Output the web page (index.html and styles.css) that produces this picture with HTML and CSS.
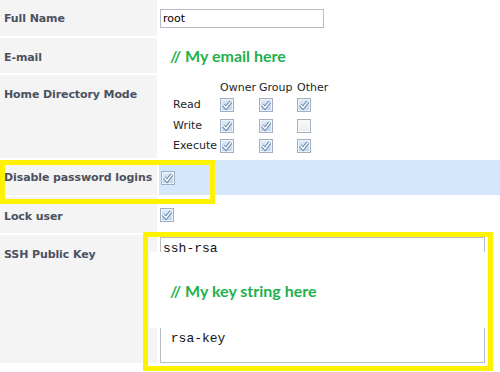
FILE: index.html
```html
<!DOCTYPE html>
<html>
<head>
<meta charset="utf-8">
<link rel="stylesheet" href="styles.css">
</head>
<body>
<div class="form">
  <div class="label label-first">Full Name</div>
  <div class="value center"><div class="textbox">root</div></div>

  <div class="label">E-mail</div>
  <div class="value center"><span class="note">// My email here</span></div>

  <div class="label">Home Directory Mode</div>
  <div class="value perms-cell">
    <div class="perms">
      <span></span><span class="head">Owner</span><span class="head">Group</span><span class="head">Other</span>
      <span class="rl">Read</span>
      <span class="cb"><svg viewBox="0 0 14 14"><path class="ck-o" d="M3.3 6.8 L6 9.8 L10.8 3.6"/><path class="ck-i" d="M3.3 6.8 L6 9.8 L10.8 3.6"/></svg></span>
      <span class="cb"><svg viewBox="0 0 14 14"><path class="ck-o" d="M3.3 6.8 L6 9.8 L10.8 3.6"/><path class="ck-i" d="M3.3 6.8 L6 9.8 L10.8 3.6"/></svg></span>
      <span class="cb"><svg viewBox="0 0 14 14"><path class="ck-o" d="M3.3 6.8 L6 9.8 L10.8 3.6"/><path class="ck-i" d="M3.3 6.8 L6 9.8 L10.8 3.6"/></svg></span>
      <span class="rl">Write</span>
      <span class="cb"><svg viewBox="0 0 14 14"><path class="ck-o" d="M3.3 6.8 L6 9.8 L10.8 3.6"/><path class="ck-i" d="M3.3 6.8 L6 9.8 L10.8 3.6"/></svg></span>
      <span class="cb"><svg viewBox="0 0 14 14"><path class="ck-o" d="M3.3 6.8 L6 9.8 L10.8 3.6"/><path class="ck-i" d="M3.3 6.8 L6 9.8 L10.8 3.6"/></svg></span>
      <span class="cb off"></span>
      <span class="rl">Execute</span>
      <span class="cb"><svg viewBox="0 0 14 14"><path class="ck-o" d="M3.3 6.8 L6 9.8 L10.8 3.6"/><path class="ck-i" d="M3.3 6.8 L6 9.8 L10.8 3.6"/></svg></span>
      <span class="cb"><svg viewBox="0 0 14 14"><path class="ck-o" d="M3.3 6.8 L6 9.8 L10.8 3.6"/><path class="ck-i" d="M3.3 6.8 L6 9.8 L10.8 3.6"/></svg></span>
      <span class="cb"><svg viewBox="0 0 14 14"><path class="ck-o" d="M3.3 6.8 L6 9.8 L10.8 3.6"/><path class="ck-i" d="M3.3 6.8 L6 9.8 L10.8 3.6"/></svg></span>
    </div>
  </div>

  <div class="label label-tight">Disable password logins</div>
  <div class="value center hl"><span class="cb"><svg viewBox="0 0 14 14"><path class="ck-o" d="M3.3 6.8 L6 9.8 L10.8 3.6"/><path class="ck-i" d="M3.3 6.8 L6 9.8 L10.8 3.6"/></svg></span></div>

  <div class="label">Lock user</div>
  <div class="value center"><span class="cb"><svg viewBox="0 0 14 14"><path class="ck-o" d="M3.3 6.8 L6 9.8 L10.8 3.6"/><path class="ck-i" d="M3.3 6.8 L6 9.8 L10.8 3.6"/></svg></span></div>

  <div class="label">SSH Public Key</div>
  <div class="value key-cell">
    <div class="textarea"><div class="ta-line">ssh-rsa</div><div class="ta-line ta-last"> rsa-key</div></div>
    <div class="cover"><span class="note">// My key string here</span></div>
  </div>
</div>
<div class="mark mark-1"></div>
<div class="mark mark-2"></div>
</body>
</html>
```
FILE: styles.css
```css
html, body {
  margin: 0;
  padding: 0;
  background: #ffffff;
}
body {
  position: relative;
  width: 500px;
  height: 372px;
  overflow: hidden;
  font-family: "DejaVu Sans", Verdana, sans-serif;
  font-size: 11px;
  color: #1e1e1e;
}
.form {
  display: grid;
  grid-template-columns: 157px 1fr;
  grid-template-rows: 36px 35px 83px 35px 36px 128px;
  gap: 2px;
}
.label {
  background: #f4f4f4;
  padding: 13px 0 0 4px;
  font-weight: bold;
  line-height: 14px;
  color: #4b5160;
  letter-spacing: -0.1px;
  white-space: nowrap;
}
.label-first {
  padding-top: 12px;
}
.label-tight {
  padding-top: 11px;
}
.value {
  background: #ffffff;
  position: relative;
}
.center {
  display: flex;
  align-items: center;
  padding-left: 1px;
}
.hl {
  background: #d5e7fa;
  padding-left: 2px;
}
.textbox {
  width: 160px;
  height: 17px;
  border: 1px solid #b6bcc6;
  padding-left: 2px;
  line-height: 17px;
  color: #000;
}
.note {
  font-family: Lato, "Open Sans", sans-serif;
  font-weight: bold;
  font-size: 16px;
  color: #22b14c;
  padding-left: 10px;
}
.perms-cell {
  padding: 5px 0 0 14px;
}
.perms {
  display: grid;
  grid-template-columns: 47px 39px 38px 40px;
  grid-template-rows: 15px 20.5px 20.5px 20.5px;
  align-items: center;
  line-height: 14px;
  color: #1e1e1e;
}
.head {
  align-self: start;
  padding-top: 1px;
}
.cb {
  box-sizing: border-box;
  display: inline-block;
  width: 14px;
  height: 14px;
  border: 1px solid #a3afbe;
  background: linear-gradient(#e2ecf8, #bcd3ec);
  box-shadow: inset 0 0 0 1px #eef4fb;
  position: relative;
}
.cb svg {
  position: absolute;
  left: -1px;
  top: -1px;
  width: 14px;
  height: 14px;
}
.cb.off {
  background: linear-gradient(#f7f7f7, #eaecef);
  box-shadow: inset 0 0 0 1px #fbfbfb;
}
.ck-o {
  fill: none;
  stroke: #6686ad;
  stroke-width: 3.4;
  stroke-linejoin: miter;
}
.ck-i {
  fill: none;
  stroke: #ffffff;
  stroke-width: 1.5;
}
.key-cell {
  padding: 2px 0 0 1px;
}
.textarea {
  box-sizing: border-box;
  width: 325px;
  height: 126px;
  border: 1px solid #b8bdc6;
  padding: 3px 0 0 2px;
  font-family: "Liberation Mono", "Courier New", monospace;
  font-size: 13px;
  line-height: 15px;
  color: #111;
}
.ta-line {
  white-space: pre;
}
.ta-last {
  margin-top: 75px;
}
.cover {
  position: absolute;
  left: -9px;
  top: 17px;
  width: 336px;
  height: 76px;
  background: #ffffff;
  display: flex;
  align-items: center;
  padding-left: 10px;
  box-sizing: border-box;
}
.mark {
  position: absolute;
  box-sizing: border-box;
  border: 5px solid #fff200;
}
.mark-1 {
  left: 0;
  top: 160px;
  width: 215px;
  height: 44px;
}
.mark-2 {
  left: 143px;
  top: 232px;
  width: 350px;
  height: 139px;
}
```
